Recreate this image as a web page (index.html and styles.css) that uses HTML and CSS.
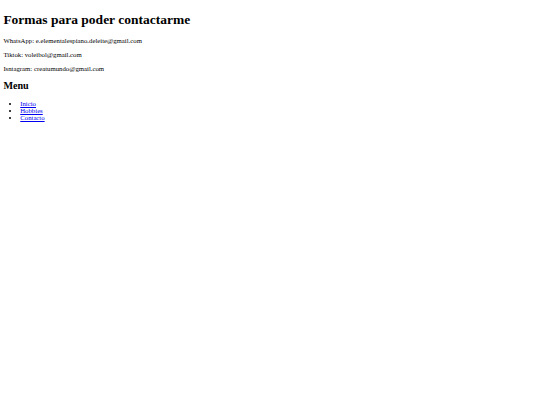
FILE: index.html
```html
<!DOCTYPE html>
<html lang="es">
<head>
<meta charset="utf-8">
<title>Contacto</title>
<link rel="stylesheet" href="styles.css">
</head>
<body>
<h1 class="title">Formas para poder contactarme</h1>
<p class="line">WhatsApp: e.elementalespiano.deleite@gmail.com</p>
<p class="line">Tiktok: voleibol@gmail.com</p>
<p class="line">Isntagram: creatumundo@gmail.com</p>
<h2 class="subtitle">Menu</h2>
<ul class="menu">
<li><a href="#">Inicio</a></li>
<li><a href="#">Hobbies</a></li>
<li><a href="#">Contacto</a></li>
</ul>
</body>
</html>
```
FILE: styles.css
```css
body {
  margin: 3.375px;
  font-family: "Liberation Serif", "Times New Roman", serif;
  font-size: 6.75px;
  color: #000;
  background: #fff;
}
.title {
  font-size: 13.5px;
  margin: 9.045px 0;
  font-weight: bold;
}
.line {
  margin: 6.75px 0;
}
.subtitle {
  font-size: 10.125px;
  margin: 8.404px 0;
  font-weight: bold;
}
.menu {
  margin: 6.75px 0;
  padding-left: 16.875px;
}
.menu a {
  color: #0000ee;
}
```
